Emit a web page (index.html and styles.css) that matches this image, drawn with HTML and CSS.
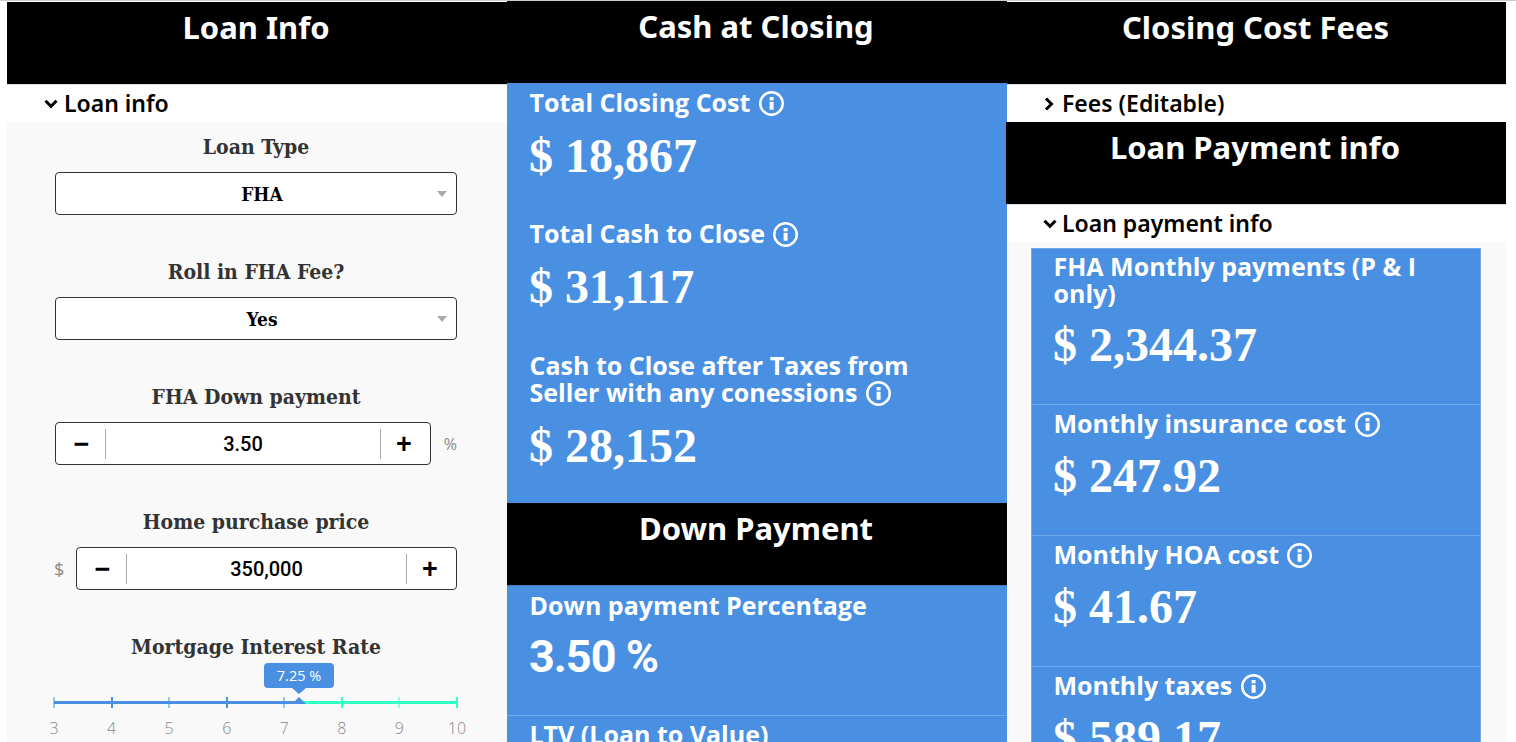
FILE: index.html
```html
<!DOCTYPE html>
<html lang="en">
<head>
<meta charset="utf-8">
<title>Loan Calculator</title>
<link rel="stylesheet" href="styles.css">
</head>
<body>
<svg class="sprite" width="0" height="0" aria-hidden="true">
  <symbol id="info" viewBox="0 0 24 24">
    <circle cx="12" cy="12" r="10.8" fill="none" stroke="currentColor" stroke-width="2.4"/>
    <rect x="10.2" y="10.4" width="3.8" height="7.6" fill="currentColor"/>
    <rect x="10.2" y="5.8" width="3.8" height="3.2" fill="currentColor"/>
  </symbol>
  <symbol id="down" viewBox="0 0 14 10">
    <path d="M1.5 1.8 L7 7.3 L12.5 1.8" fill="none" stroke="currentColor" stroke-width="3"/>
  </symbol>
  <symbol id="right" viewBox="0 0 10 14">
    <path d="M2 1.5 L7.5 7 L2 12.5" fill="none" stroke="currentColor" stroke-width="3"/>
  </symbol>
</svg>
<main class="page">
  <section class="col col-left">
    <h2 class="banner">Loan Info</h2>
    <h3 class="acc"><svg class="chev"><use href="#down"/></svg>Loan info</h3>
    <div class="form">
      <div class="field">
        <div class="field-label">Loan Type</div>
        <div class="select">FHA<span class="caret"></span></div>
      </div>
      <div class="field">
        <div class="field-label">Roll in FHA Fee?</div>
        <div class="select">Yes<span class="caret"></span></div>
      </div>
      <div class="field">
        <div class="field-label">FHA Down payment</div>
        <div class="input-row">
          <div class="stepper"><button class="step">−</button><span class="step-val">3.50</span><button class="step">+</button></div>
          <span class="unit unit-after">%</span>
        </div>
      </div>
      <div class="field">
        <div class="field-label">Home purchase price</div>
        <div class="input-row">
          <span class="unit unit-before">$</span>
          <div class="stepper"><button class="step">−</button><span class="step-val">350,000</span><button class="step">+</button></div>
        </div>
      </div>
      <div class="field">
        <div class="field-label">Mortgage Interest Rate</div>
        <div class="slider">
          <div class="tip">7.25 %</div>
          <div class="track">
            <span class="fill"></span>
            <i class="tick a" style="left:0%"></i><i class="tick a w" style="left:14.2857%"></i><i class="tick a" style="left:28.5714%"></i><i class="tick a w" style="left:42.8571%"></i><i class="tick a" style="left:57.1429%"></i><i class="tick b w" style="left:71.4286%"></i><i class="tick b" style="left:85.7143%"></i><i class="tick b w" style="left:100%"></i>
            <span class="thumb"></span>
          </div>
          <div class="scale">
            <span style="left:0%">3</span><span style="left:14.2857%">4</span><span style="left:28.5714%">5</span><span style="left:42.8571%">6</span><span style="left:57.1429%">7</span><span style="left:71.4286%">8</span><span style="left:85.7143%">9</span><span style="left:100%">10</span>
          </div>
        </div>
      </div>
    </div>
  </section>

  <section class="col col-mid">
    <h2 class="banner">Cash at Closing</h2>
    <div class="stats stats-closing">
      <div class="stat s131"><div class="stat-label">Total Closing Cost <svg class="info"><use href="#info"/></svg></div><div class="stat-value">$ 18,867</div></div>
      <div class="stat s132"><div class="stat-label">Total Cash to Close <svg class="info"><use href="#info"/></svg></div><div class="stat-value">$ 31,117</div></div>
      <div class="stat"><div class="stat-label">Cash to Close after Taxes from<br>Seller with any conessions <svg class="info"><use href="#info"/></svg></div><div class="stat-value">$ 28,152</div></div>
    </div>
    <h2 class="banner">Down Payment</h2>
    <div class="stats stats-down">
      <div class="stat s130 ruled"><div class="stat-label">Down payment Percentage</div><div class="stat-value plain">3.50 %</div></div>
      <div class="stat"><div class="stat-label">LTV (Loan to Value)</div></div>
    </div>
  </section>

  <section class="col col-right">
    <h2 class="banner">Closing Cost Fees</h2>
    <h3 class="acc"><svg class="chev chev-r"><use href="#right"/></svg>Fees (Editable)</h3>
    <h2 class="banner banner-out">Loan Payment info</h2>
    <h3 class="acc"><svg class="chev"><use href="#down"/></svg>Loan payment info</h3>
    <div class="pay-wrap">
      <div class="stats card">
        <div class="stat s157 ruled"><div class="stat-label">FHA Monthly payments (P &amp; I only)</div><div class="stat-value">$ 2,344.37</div></div>
        <div class="stat s131 ruled"><div class="stat-label">Monthly insurance cost <svg class="info"><use href="#info"/></svg></div><div class="stat-value">$ 247.92</div></div>
        <div class="stat s131 ruled"><div class="stat-label">Monthly HOA cost <svg class="info"><use href="#info"/></svg></div><div class="stat-value">$ 41.67</div></div>
        <div class="stat"><div class="stat-label">Monthly taxes <svg class="info"><use href="#info"/></svg></div><div class="stat-value">$ 589.17</div></div>
      </div>
    </div>
  </section>
</main>
</body>
</html>
```
FILE: styles.css
```css
* { box-sizing: border-box; }
html, body { margin: 0; height: 742px; overflow: hidden; background: #fff; }
.sprite { position: absolute; }
.page {
  display: grid;
  grid-template-columns: 500px 500px 499px;
  padding: 1px 0 0 7px;
  height: 742px;
  overflow: hidden;
  border-top: 1px solid #ccc;
  font-family: "Open Sans", sans-serif;
}
.col { min-width: 0; display: flex; flex-direction: column; }
.col-mid { margin-top: -1px; }

.banner {
  margin: 0;
  height: 82px;
  flex: none;
  background: #000;
  color: #fff;
  font: 700 31px/51px "Noto Sans", sans-serif;
  text-align: center;
  padding-right: 2px;
}
.banner-out { margin-left: -1px; }

.acc {
  margin: 0;
  height: 38px;
  flex: none;
  background: #fff;
  color: #000;
  font: 600 23px/35px "Noto Sans", sans-serif;
  padding-left: 37px;
  display: flex;
  align-items: center;
  border-top: 1px solid #ddd;
}
.col-right .acc { padding-left: 36px; }
.chev { width: 14px; height: 10px; margin-right: 6px; color: #000; }
.col-right .chev { margin-right: 5px; }
.col-right .chev-r { width: 10px; height: 14px; margin-left: 1px; margin-right: 8px; }

.form { flex: 1; background: #f9f9f9; padding: 8px 50px 0 48px; }
.field { height: 125px; }
.field-label {
  height: 42px;
  font: 700 21px/34px "DejaVu Serif Condensed", "DejaVu Serif", serif;
  font-stretch: condensed;
  color: #333;
  text-align: center;
}
.select {
  position: relative;
  height: 43px;
  background: #fff;
  border: 1px solid #333;
  border-radius: 4px;
  font: 700 19px/43px "DejaVu Serif Condensed", serif;
  color: #000;
  text-align: center;
  padding-left: 12px;
}
.caret {
  position: absolute;
  right: 9px;
  top: 18px;
  border: 5px solid transparent;
  border-top: 6px solid #aaa;
  border-bottom: 0;
}
.input-row { display: flex; align-items: center; height: 43px; }
.stepper {
  flex: 1;
  height: 43px;
  display: flex;
  align-items: center;
  background: #fff;
  border: 1px solid #333;
  border-radius: 4px;
}
.step {
  flex: none;
  width: 50px;
  height: 30px;
  background: none;
  border: 0;
  padding: 0;
  font: 700 27px/28px "Liberation Sans", sans-serif;
  color: #000;
}
.step:first-child { border-right: 1px solid #aaa; padding-left: 2px; }
.step:last-child { border-left: 1px solid #aaa; padding-right: 3px; }
.step-val { flex: 1; text-align: center; font: 500 20px Roboto, sans-serif; color: #000; }
.unit { font: 400 16px "Open Sans", sans-serif; color: #888; }
.unit-after { width: 26px; text-align: right; flex: none; }
.unit-before { width: 21px; flex: none; font-size: 18px; margin-left: -1px; margin-right: 1px; }

.slider { position: relative; height: 64px; margin: 16px 0 0 -1px; }
.tip {
  position: absolute;
  left: 210px;
  top: -25px;
  width: 70px;
  height: 25px;
  background: #4a90e2;
  border-radius: 4px;
  color: #fff;
  font: 400 14.5px/25px "Open Sans", sans-serif;
  text-align: center;
}
.tip::after {
  content: "";
  position: absolute;
  left: 28px;
  top: 25px;
  border: 7px solid transparent;
  border-top: 6px solid #4a90e2;
  border-bottom: 0;
}
.track { position: absolute; left: 0; right: 0; top: 13px; height: 3px; background: #33ffc9; }
.fill { position: absolute; left: 0; top: 0; bottom: 0; width: 60.7%; background: #4a90e2; }
.tick { position: absolute; top: -4px; width: 1px; height: 11px; transform: translateX(-50%); }
.tick.w { width: 2px; }
.tick.a { background: #4a90e2; }
.tick.b { background: #33ffc9; }
.thumb {
  position: absolute;
  left: 60.7%;
  top: -4px;
  margin-left: -7px;
  border: 7px solid transparent;
  border-bottom: 7px solid #4a90e2;
  border-top: 0;
}
.scale { position: absolute; left: 0; right: 0; top: 28px; height: 24px; }
.scale span {
  position: absolute;
  transform: translateX(-50%);
  font: 300 16px/24px "Open Sans", sans-serif;
  color: #888;
}

.stats { background: #4a90e2; color: #fff; flex: none; }
.stats-closing { height: 420px; }
.stats-down { border-top: 1px solid #3f7cc4; }
.stat { padding: 6px 22px 0 23px; }
.s130 { height: 130px; }
.s131 { height: 131px; }
.s132 { height: 132px; }
.s157 { height: 156px; }
.ruled { border-bottom: 1px solid #6fa8ec; }
.stat-label { font: 700 25px/27px "Open Sans", sans-serif; margin-left: -0.5px; }
.info { width: 25px; height: 25px; vertical-align: -4px; margin-left: 2px; }
.stat-value {
  margin-top: 10px;
  margin-left: -1px;
  font: 700 48px/60px "Liberation Serif", serif;
  white-space: nowrap;
}
.stat-value.plain { font: 700 45px/60px Roboto, sans-serif; letter-spacing: -1px; margin-top: 8px; }
.stats-down .stat:last-child { padding-top: 5px; }

.pay-wrap { flex: 1; background: #f9f9f9; padding: 6px 25px 0 24px; }
.card { border: 1px solid #6fa8ec; border-bottom: 0; }
.card .stat { padding: 5px 22px 0 22px; }
.card .stat-value { margin-top: 9px; }
.card .s157 { padding-top: 4px; }
.card .s157 .stat-value { margin-top: 8px; }
```
